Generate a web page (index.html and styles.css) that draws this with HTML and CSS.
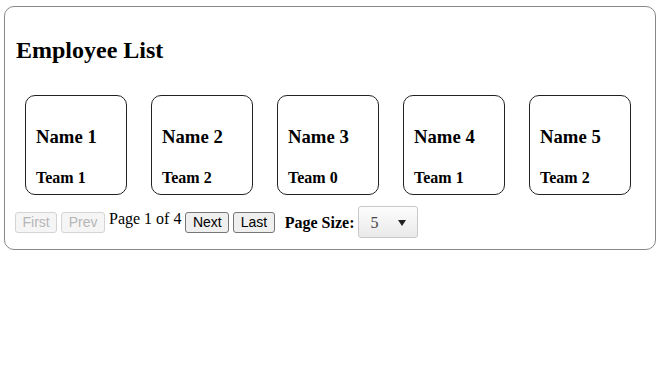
FILE: index.html
```html
<!DOCTYPE html>
<html lang="en">
  <head>
    <meta charset="UTF-8" />
    <meta name="viewport" content="width=device-width, initial-scale=1.0" />
    <title>Employee List</title>
    <link rel="stylesheet" href="styles.css">
  </head>
  <body>
    <main class="panel">
      <h2>Employee List</h2>
      <!-- una tarjeta por empleado de la página actual -->
      <section class="lista">
        <div class="tarjeta">
          <h3>Name 1</h3>
          <h4>Team 1</h4>
        </div>
        <div class="tarjeta">
          <h3>Name 2</h3>
          <h4>Team 2</h4>
        </div>
        <div class="tarjeta">
          <h3>Name 3</h3>
          <h4>Team 0</h4>
        </div>
        <div class="tarjeta">
          <h3>Name 4</h3>
          <h4>Team 1</h4>
        </div>
        <div class="tarjeta">
          <h3>Name 5</h3>
          <h4>Team 2</h4>
        </div>
      </section>
      <div class="paginacion">
        <button disabled>First</button>
        <button disabled>Prev</button>
        <span class="pagina">Page 1 of 4</span>
        <button>Next</button>
        <button>Last</button>
        <label for="tam">Page Size:</label>
        <span class="selector">
          <select id="tam">
            <option>5</option>
            <option>10</option>
            <option>20</option>
          </select>
        </span>
      </div>
    </main>
  </body>
</html>
```

FILE: styles.css
```css
body {
  margin: 0;
  font-family: "Liberation Serif", "Times New Roman", serif;
  color: black;
  background: white;
}

.panel {
  margin: 6px 11px 0 4px;
  padding: 10px;
  border: 1px solid #888;
  border-radius: 10px;
}

.panel h2 {
  font-size: 24px;
  margin: 20px 0 21px 1px;
}

/* las tarjetas van en fila con hueco fijo entre ellas */
.lista {
  display: flex;
  gap: 24px;
  padding: 10px 0 10px 10px;
}

.tarjeta {
  width: 102px;
  height: 100px;
  box-sizing: border-box;
  padding: 10px;
  border: 1px solid #222;
  border-radius: 10px;
}

.tarjeta h3 {
  font-size: 18.72px;
  margin: 20px 0 0;
}

.tarjeta h4 {
  font-size: 16px;
  margin: 21px 0 0;
}

.paginacion {
  display: flex;
  align-items: center;
  gap: 4px;
  height: 34px;
}

.paginacion button {
  font-family: "Liberation Sans", Arial, sans-serif;
  font-size: 14px;
  height: 21px;
  padding: 1px 6.5px;
  border: 1px solid #767676;
  border-radius: 3px;
  background-color: #efefef;
  color: black;
}

.paginacion button:disabled {
  color: #b5b5b5;
  border-color: #d4d4d4;
  background-color: #f5f5f5;
}

.pagina {
  font-size: 16px;
  margin-bottom: 6px;
}

.paginacion label {
  font-weight: bold;
  font-size: 16px;
  margin-left: 6px;
  margin-top: 2px;
}

/* el triángulo del desplegable lo ponemos encima del select */
.selector {
  position: relative;
  display: inline-block;
}

.selector select {
  appearance: none;
  width: 60px;
  height: 32px;
  padding: 0 0 0 11px;
  font-family: "Liberation Serif", "Times New Roman", serif;
  font-size: 16px;
  color: #444;
  border: 1px solid #c8c8c8;
  border-radius: 3px;
  background: linear-gradient(#fdfdfd, #e9e9e9);
}

.selector::after {
  content: "";
  position: absolute;
  left: 40px;
  top: 14px;
  border-left: 4px solid transparent;
  border-right: 4px solid transparent;
  border-top: 6px solid #222;
  pointer-events: none;
}
```
